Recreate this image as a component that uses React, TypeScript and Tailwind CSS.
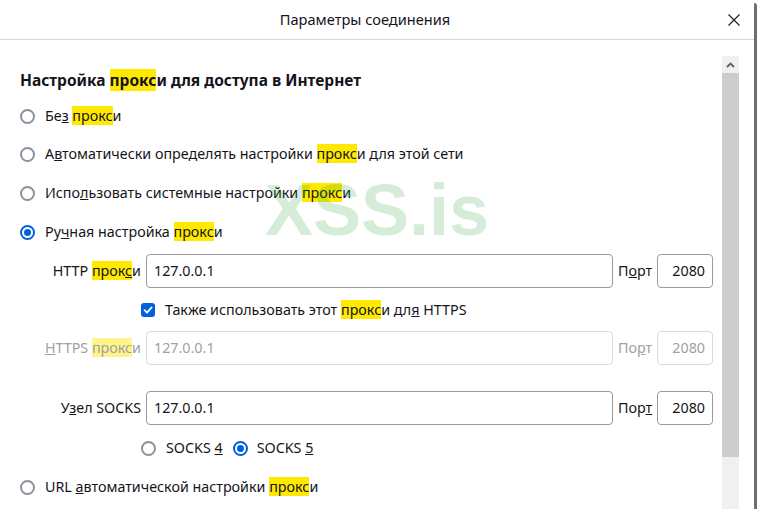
import React from "react";

const font = { fontFamily: '"Noto Sans", "Open Sans", sans-serif' };

function Radio({ checked = false }: { checked?: boolean }) {
  return (
    <span
      className={`flex h-[15px] w-[15px] shrink-0 items-center justify-center rounded-full border-2 bg-white ${
        checked ? "border-[#0061e0]" : "border-[#8f8f9d]"
      }`}
    >
      {checked && <span className="h-[7px] w-[7px] rounded-full bg-[#0061e0]" />}
    </span>
  );
}

function Proksi({ dim = false, key_ = false }: { dim?: boolean; key_?: boolean }) {
  return (
    <>
      <span className={dim ? "bg-[#fff38a]" : "bg-[#ffe900]"}>
        прок{key_ ? <u>с</u> : "с"}
      </span>
      и
    </>
  );
}

function RadioRow({
  checked,
  children,
  className = "",
}: {
  checked?: boolean;
  children: React.ReactNode;
  className?: string;
}) {
  return (
    <div className={`flex h-[24px] items-center gap-[10px] ${className}`}>
      <Radio checked={checked} />
      <span>{children}</span>
    </div>
  );
}

function ProxyField({
  label,
  port,
  value,
  disabled = false,
  className = "",
}: {
  label: React.ReactNode;
  port: React.ReactNode;
  value: string;
  disabled?: boolean;
  className?: string;
}) {
  const border = disabled ? "border-[#dcdcdf]" : "border-[#9a9a9e]";
  const text = disabled ? "text-[#a0a0a8]" : "text-[#15141a]";
  return (
    <div className={`flex h-[34px] items-center ${className}`}>
      <div className={`w-[126px] pr-[5px] text-right ${text}`}>{label}</div>
      <div
        className={`flex h-full flex-1 items-center rounded-[4px] border px-[7px] ${border} ${text}`}
      >
        {value}
      </div>
      <div className={`w-[44px] pl-[5px] ${text}`}>{port}</div>
      <div
        className={`flex h-full w-[56px] items-center justify-end rounded-[4px] border pr-[7px] ${border} ${text}`}
      >
        2080
      </div>
    </div>
  );
}

export default function App() {
  return (
    <div
      className="flex h-[509px] w-[758px] overflow-hidden bg-white text-[14.3px] text-[#15141a]"
      style={font}
    >
      <div className="flex w-[754px] flex-col">
        <div className="flex h-[40px] shrink-0 items-center border-b border-[#d6d6d6]">
          <div className="flex flex-1 justify-center pl-[2px] text-[14.6px]">
            Параметры соединения
          </div>
          <svg width="12" height="12" viewBox="0 0 12 12" className="mr-[14px]">
            <path d="M0.5 0.5 11.5 11.5 M11.5 0.5 0.5 11.5" stroke="#222" strokeWidth="1.2" />
          </svg>
        </div>
        <div className="flex flex-1">
          <div className="relative flex flex-1 flex-col pl-[20px] pr-[9px] pt-[30px]">
            <div className="flex h-[22px] items-center text-[15.5px] font-bold">
              <span>
                Настройка <Proksi /> для доступа в Интернет
              </span>
            </div>
            <RadioRow className="mt-[12px]">
              Бе<u>з</u> <Proksi />
            </RadioRow>
            <RadioRow className="mt-[14px]">
              А<u>в</u>томатически определять настройки <Proksi /> для этой сети
            </RadioRow>
            <RadioRow className="mt-[15px]">
              Испо<u>л</u>ьзовать системные настройки <Proksi />
            </RadioRow>
            <RadioRow checked className="mt-[15px]">
              Ру<u>ч</u>ная настройка <Proksi />
            </RadioRow>

            <ProxyField
              className="mt-[10px]"
              label={
                <>
                  HTTP <Proksi key_ />
                </>
              }
              port={
                <>
                  П<u>о</u>рт
                </>
              }
              value="127.0.0.1"
            />

            <div className="mt-[10px] flex h-[24px] items-center gap-[10px] pl-[121px]">
              <span className="flex h-[14px] w-[14px] items-center justify-center rounded-[3px] bg-[#0061e0]">
                <svg width="10" height="10" viewBox="0 0 10 10">
                  <path
                    d="M1.5 5.2 4 7.6 8.6 2.4"
                    fill="none"
                    stroke="white"
                    strokeWidth="1.8"
                    strokeLinecap="round"
                    strokeLinejoin="round"
                  />
                </svg>
              </span>
              <span>
                Также использовать этот <Proksi /> дл<u>я</u> HTTPS
              </span>
            </div>

            <ProxyField
              className="mt-[9px]"
              disabled
              label={
                <>
                  <u>H</u>TTPS <Proksi dim />
                </>
              }
              port={
                <>
                  По<u>р</u>т
                </>
              }
              value="127.0.0.1"
            />

            <ProxyField
              className="mt-[26px]"
              label={
                <>
                  У<u>з</u>ел SOCKS
                </>
              }
              port={
                <>
                  Пор<u>т</u>
                </>
              }
              value="127.0.0.1"
            />

            <div className="mt-[11px] flex h-[24px] items-center pl-[121px]">
              <Radio />
              <span className="ml-[10px]">
                SOCKS <u>4</u>
              </span>
              <span className="ml-[10px]">
                <Radio checked />
              </span>
              <span className="ml-[9px]">
                SOCKS <u>5</u>
              </span>
            </div>

            <RadioRow className="mt-[15px]">
              URL <u>а</u>втоматической настройки <Proksi />
            </RadioRow>

            <div
              className="pointer-events-none absolute left-[265px] top-[134px] text-[72px] font-bold leading-none text-[rgba(40,160,60,0.2)]"
              style={{ fontFamily: '"Liberation Sans", Arial, sans-serif' }}
            >
              XSS.is
            </div>
          </div>
          <div className="mt-[16px] flex w-[17px] flex-col bg-[#f0f0f0]">
            <div className="flex h-[17px] items-center justify-center">
              <svg width="9" height="6" viewBox="0 0 9 6">
                <path d="M1 5 4.5 1.5 8 5" fill="none" stroke="#606060" strokeWidth="1.8" />
              </svg>
            </div>
            <div className="h-[384px] bg-[#cdcdcd]" />
          </div>
          <div className="w-[15px]" />
        </div>
      </div>
      <div className="mt-[3px] w-[3px] rounded-tr-[3px] bg-[#6e6e6e]" />
      <div className="w-[1px]" />
    </div>
  );
}
